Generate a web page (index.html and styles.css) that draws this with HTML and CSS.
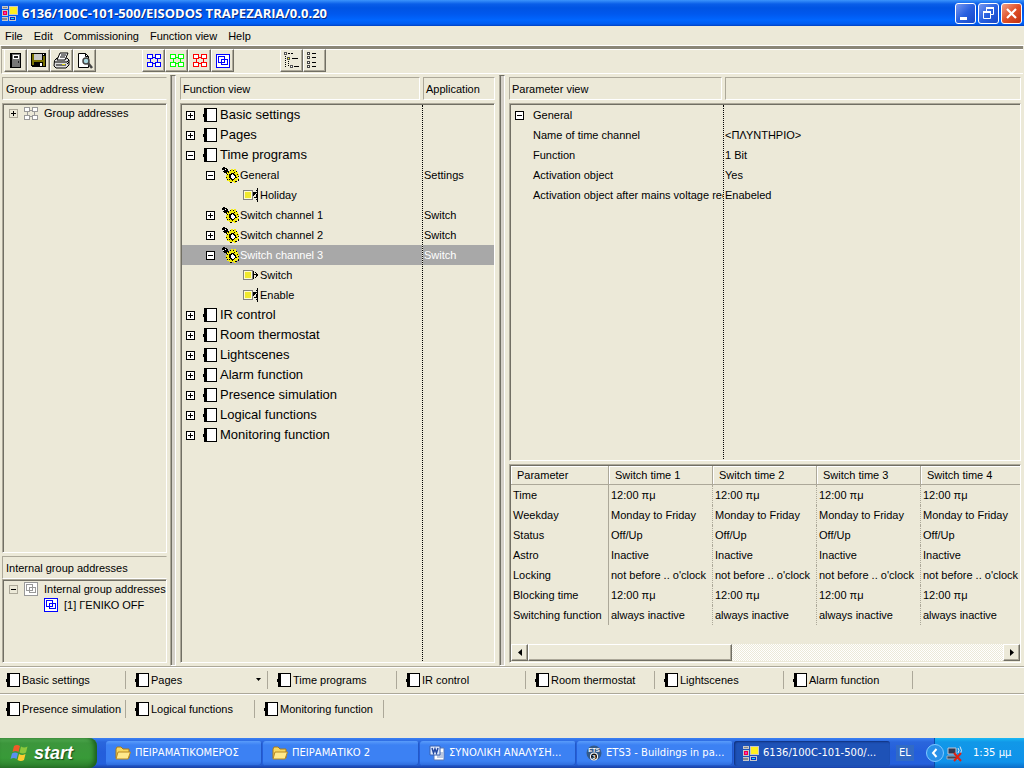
FILE: index.html
```html
<!DOCTYPE html>
<html lang="en">
<head>
<meta charset="utf-8">
<title>6136/100C-101-500/EISODOS TRAPEZARIA/0.0.20</title>
<link rel="stylesheet" href="styles.css">
</head>
<body>
<svg class="defs" aria-hidden="true">
  <symbol id="book" viewBox="0 0 14 14"><path d="M1 0h13v14H1zM0 6h1v3H0z" fill="#000"/><path d="M4 1h9v12H4z" fill="#fff"/></symbol>
  <symbol id="gears" viewBox="0 0 17 16">
    <path d="M1 0h2v1h2v1h1v2h2v2H7v1H4V6H2V5H1V3H0V1h1z" fill="#000"/><path d="M3 2h1v1H3zM1 3h1v1H1z" fill="#fff"/>
    <path d="M8 3h1V2h2v1h1V2h2v2h1v1h1v2h1v2h-1v2h1v2h-2v1h-1v2h-2v-1h-2v1H8v-1H7v-1H5v-2H4V8h1V5h2V4h1z" fill="#f4ec10"/>
    <path d="M8 3h1v1H8zM11 3h1v1h-1zM14 4h1v1h-1zM6 5h1v1H6zM5 7h1v1H5zM4 10h1v1H4zM15 7h1v1h-1zM16 9h1v1h-1zM14 10h1v1h-1zM5 12h1v1H5zM7 12h1v1H7zM8 15h2v1H8zM10 13h1v1h-1zM13 14h2v1h-2zM16 12h1v2h-1zM12 5h1v1h-1zM7 7h1v1H7zM9 6h1v1H9z" fill="#000"/>
    <path d="M9 6h3v1h1v1h1v3h-1v1h-1v1H9v-1H8v-1H7V8h1V7h1z" fill="#000"/><path d="M10 7h1v1h1v1h1v2h-1v1h-2v-1H9V8h1z" fill="#fff"/>
  </symbol>
  <symbol id="obj" viewBox="0 0 10 10"><path d="M0 0h10v10H0z" fill="#808080"/><path d="M1 1h8v8H1z" fill="#fffbd0"/><path d="M2 2h6v6H2z" fill="#f0e830"/></symbol>
  <symbol id="out" viewBox="0 0 15 12"><use href="#obj" y="1" width="10" height="10"/><path d="M10 2h1v8h-1zM11 5h4v1h-4zM12 3h1v1h1v1h1v2h-1v1h-1v1h-1V8h1V4h-1z" fill="#000"/></symbol>
  <symbol id="in" viewBox="0 0 15 14"><use href="#obj" y="2" width="10" height="10"/><path d="M14 0h1v14h-1zM10 4h4v1h-1v1h-1v1h-1v1h-1zM11 9h3v1h-3zM13 2h1v1h-1zM13 11h1v1h-1zM13 6h1v3h-1z" fill="#000"/></symbol>
  <symbol id="group" viewBox="0 0 14 13"><path d="M0 0h6v5H0zM8 0h6v5H8zM0 8h6v5H0zM8 8h6v5H8zM6 3h2v1H6zM6 9h2v1H6zM3 5h1v3H3zM10 5h1v3h-1z" fill="currentColor"/><path d="M1 1h4v3H1zM9 1h4v3H9zM1 9h4v3H1zM9 9h4v3H9z" fill="#fff"/></symbol>
  <symbol id="inner" viewBox="0 0 14 14"><path d="M0 0h14v14H0z" fill="currentColor"/><path d="M1 1h12v12H1z" fill="#fff"/><path d="M2 2h7v1H2zM2 3h1v6H2zM8 3h1v6H8zM2 8h6v1H2zM5 5h7v1H5zM5 6h1v5H5zM11 6h1v5h-1zM5 10h6v1H5z" fill="currentColor"/></symbol>
  <symbol id="app" viewBox="0 0 16 15"><path d="M0 0h6v3H0zM0 4h6v6H0zM7 0h9v9H7zM0 11h6v4H0zM7 10h7v5H7z" fill="#c8c8c8"/><path d="M1 1h4v1H1zM0 12h5v2H0z" fill="#888"/><path d="M1 5h4v4H1z" fill="#f00040"/><path d="M8 1h7v7H8z" fill="#ffef20"/><path d="M8 11h5v3H8z" fill="#1030c8"/><path d="M9 12h3v1H9z" fill="#18e8f0"/><path d="M2 6h2v2H2z" fill="#f030c0"/></symbol>
  <symbol id="folder" viewBox="0 0 16 14"><path d="M1 3l1-2h4l2 2h6v9H1z" fill="#f8d860" stroke="#a87818"/><path d="M3 6h12.500L13 13H1z" fill="#ffe98c" stroke="#b88820"/></symbol>
</svg>

<header class="titlebar">
  <svg class="app-icon" shape-rendering="crispEdges"><use href="#app"/></svg>
  <h1>6136/100C-101-500/EISODOS TRAPEZARIA/0.0.20</h1>
  <div class="window-buttons">
    <button aria-label="Minimize"><svg width="19" height="19"><path d="M4 13h7v3H4z" fill="#fff"/></svg></button>
    <button aria-label="Restore"><svg width="19" height="19"><path d="M7.500 7V4.500h7v6H12M4.500 8.500h7v6h-7z" fill="none" stroke="#fff"/><path d="M4 7h8v2H4zM7 3h8v2H7z" fill="#fff"/></svg></button>
    <button class="close" aria-label="Close"><svg width="19" height="19"><path d="M5 5l9 9M14 5l-9 9" stroke="#fff" stroke-width="2.200"/></svg></button>
  </div>
</header>

<nav class="menu"><button>File</button><button>Edit</button><button>Commissioning</button><button>Function view</button><button>Help</button></nav>

<div class="toolbar" role="toolbar">
  <div class="tools">
    <button aria-label="Close device"><svg width="19" height="19" shape-rendering="crispEdges"><path d="M4 2h11v15H4z" fill="#000"/><path d="M6 3h8v13H6z" fill="#777"/><path d="M7 4h6v4H7z" fill="#fff"/><path d="M8 5h4v2H8zM12 10h1v2h-1z" fill="#222"/></svg></button>
    <button aria-label="Save"><svg width="19" height="19" shape-rendering="crispEdges"><path d="M2 2h15v14H3v-1H2z" fill="#000"/><path d="M3 3h2v11H3zM14 5h2v10h-2zM5 9h9v2H5z" fill="#777000"/><path d="M5 3h8v6H5z" fill="#c8c8c8"/><path d="M14 3h1v1h-1zM11 12h2v3h-2z" fill="#fff"/></svg></button>
    <button aria-label="Print"><svg width="19" height="19"><path d="M2.500 9.500L5 7h10l2 2v5l-3 3H4l-2-2z" fill="#ddd" stroke="#000"/><path d="M5 9l3-7h8l-3 7z" fill="#fff" stroke="#000"/><path d="M9 4h5M8 6h5M3 11h12M4 14h10M15 11l2-2M15 13l2-2" stroke="#000"/><path d="M10 13h3v1h-3z" fill="#e8e020"/></svg></button>
    <button aria-label="Print preview"><svg width="19" height="19"><path d="M3.500 2.500h7l3 3v11h-10z" fill="#fff" stroke="#000"/><path d="M10.500 2.500v3h3" fill="none" stroke="#000"/><circle cx="11" cy="10" r="3" fill="#a8d8e0" stroke="#444" stroke-width="1.500"/><path d="M13 12l4 5" stroke="#444" stroke-width="2.500"/></svg></button>
  </div>
  <div class="tools">
    <button class="blue" aria-label="Group addresses"><svg class="i-group"><use href="#group"/></svg></button>
    <button class="green" aria-label="Sending addresses"><svg class="i-group"><use href="#group"/></svg></button>
    <button class="red" aria-label="Unused addresses"><svg class="i-group"><use href="#group"/></svg></button>
    <button class="blue" aria-label="Internal addresses"><svg class="i-inner"><use href="#inner"/></svg></button>
  </div>
  <div class="tools">
    <button aria-label="Expand tree"><svg width="19" height="19" shape-rendering="crispEdges"><path d="M2 1h3v3H2zM5 6h3v3H5zM8 14h3v3H8z" fill="#555"/><path d="M3 2h1v1H3zM9 15h1v1H9z" fill="#fff"/><path d="M6 7h1v1H6z" fill="#ff0"/><path d="M6 2h2v1H6zM9 2h2v1H9zM10 7h6v1h-6zM12 15h5v1h-5zM3 5h1v1H3zM3 7h1v1H3zM3 9h1v1H3zM3 11h1v1H3zM3 13h1v1H3zM3 15h1v1H3zM6 10h1v1H6zM6 12h1v1H6zM6 14h1v1H6z" fill="#000"/></svg></button>
    <button aria-label="Collapse tree"><svg width="19" height="19" shape-rendering="crispEdges"><path d="M2 1h3v3H2zM2 5h3v3H2zM2 10h3v3H2zM2 14h3v3H2z" fill="#444"/><path d="M3 2h1v1H3zM3 6h1v1H3zM3 11h1v1H3zM3 15h1v1H3z" fill="#fff"/><path d="M7 2h4v1H7zM7 6h4v1H7zM7 11h4v1H7zM7 15h4v1H7z" fill="#000"/></svg></button>
  </div>
</div>

<main class="workspace">
  <section class="panel addresses">
    <h2 class="head open">Group address view</h2>
    <div class="list grow small-tree">
      <div class="row"><button class="toggle plus" aria-label="Expand"></button><svg class="i-group muted"><use href="#group"/></svg><span>Group addresses</span></div>
    </div>
    <h2 class="head open">Internal group addresses</h2>
    <div class="list internal small-tree">
      <div class="row"><button class="toggle" aria-label="Collapse"></button><svg class="i-inner muted"><use href="#inner"/></svg><span>Internal group addresses</span></div>
      <div class="row child"><svg class="i-inner blue"><use href="#inner"/></svg><span>[1] ΓΕΝΙΚΟ OFF</span></div>
    </div>
  </section>
  <div class="splitter"></div>
  <section class="panel functions">
    <div class="heads"><h2 class="head">Function view</h2><h2 class="head">Application</h2></div>
    <div class="list split grow">
      <div class="names">
        <div class="row top"><button class="toggle plus" aria-label="Expand"></button><svg class="i-book"><use href="#book"/></svg><span>Basic settings</span></div>
        <div class="row top"><button class="toggle plus" aria-label="Expand"></button><svg class="i-book"><use href="#book"/></svg><span>Pages</span></div>
        <div class="row top"><button class="toggle" aria-label="Collapse"></button><svg class="i-book"><use href="#book"/></svg><span>Time programs</span></div>
        <div class="row channel"><button class="toggle" aria-label="Collapse"></button><svg class="i-gears"><use href="#gears"/></svg><span>General</span></div>
        <div class="row object"><svg class="i-in"><use href="#in"/></svg><span>Holiday</span></div>
        <div class="row channel"><button class="toggle plus" aria-label="Expand"></button><svg class="i-gears"><use href="#gears"/></svg><span>Switch channel 1</span></div>
        <div class="row channel"><button class="toggle plus" aria-label="Expand"></button><svg class="i-gears"><use href="#gears"/></svg><span>Switch channel 2</span></div>
        <div class="row channel selected"><button class="toggle" aria-label="Collapse"></button><svg class="i-gears"><use href="#gears"/></svg><span>Switch channel 3</span></div>
        <div class="row object"><svg class="i-out"><use href="#out"/></svg><span>Switch</span></div>
        <div class="row object"><svg class="i-in"><use href="#in"/></svg><span>Enable</span></div>
        <div class="row top"><button class="toggle plus" aria-label="Expand"></button><svg class="i-book"><use href="#book"/></svg><span>IR control</span></div>
        <div class="row top"><button class="toggle plus" aria-label="Expand"></button><svg class="i-book"><use href="#book"/></svg><span>Room thermostat</span></div>
        <div class="row top"><button class="toggle plus" aria-label="Expand"></button><svg class="i-book"><use href="#book"/></svg><span>Lightscenes</span></div>
        <div class="row top"><button class="toggle plus" aria-label="Expand"></button><svg class="i-book"><use href="#book"/></svg><span>Alarm function</span></div>
        <div class="row top"><button class="toggle plus" aria-label="Expand"></button><svg class="i-book"><use href="#book"/></svg><span>Presence simulation</span></div>
        <div class="row top"><button class="toggle plus" aria-label="Expand"></button><svg class="i-book"><use href="#book"/></svg><span>Logical functions</span></div>
        <div class="row top"><button class="toggle plus" aria-label="Expand"></button><svg class="i-book"><use href="#book"/></svg><span>Monitoring function</span></div>
      </div>
      <div class="values">
        <div class="row"></div><div class="row"></div><div class="row"></div>
        <div class="row">Settings</div><div class="row"></div>
        <div class="row">Switch</div><div class="row">Switch</div><div class="row selected">Switch</div>
      </div>
    </div>
  </section>
  <div class="splitter"></div>
  <section class="panel parameters">
    <div class="heads"><h2 class="head">Parameter view</h2><div class="head"></div></div>
    <div class="list split grow">
      <div class="names">
        <div class="row"><button class="toggle" aria-label="Collapse"></button><span>General</span></div>
        <div class="row param">Name of time channel</div>
        <div class="row param">Function</div>
        <div class="row param">Activation object</div>
        <div class="row param">Activation object after mains voltage rec</div>
      </div>
      <div class="values">
        <div class="row"></div><div class="row">&lt;ΠΛΥΝΤΗΡΙΟ&gt;</div><div class="row">1 Bit</div><div class="row">Yes</div><div class="row">Enabeled</div>
      </div>
    </div>
    <div class="list times">
      <div class="table-view">
        <table>
          <thead><tr><th>Parameter</th><th>Switch time 1</th><th>Switch time 2</th><th>Switch time 3</th><th>Switch time 4</th></tr></thead>
          <tbody>
            <tr><td>Time</td><td>12:00 πμ</td><td>12:00 πμ</td><td>12:00 πμ</td><td>12:00 πμ</td></tr>
            <tr><td>Weekday</td><td>Monday to Friday</td><td>Monday to Friday</td><td>Monday to Friday</td><td>Monday to Friday</td></tr>
            <tr><td>Status</td><td>Off/Up</td><td>Off/Up</td><td>Off/Up</td><td>Off/Up</td></tr>
            <tr><td>Astro</td><td>Inactive</td><td>Inactive</td><td>Inactive</td><td>Inactive</td></tr>
            <tr><td>Locking</td><td>not before .. o'clock</td><td>not before .. o'clock</td><td>not before .. o'clock</td><td>not before .. o'clock</td></tr>
            <tr><td>Blocking time</td><td>12:00 πμ</td><td>12:00 πμ</td><td>12:00 πμ</td><td>12:00 πμ</td></tr>
            <tr><td>Switching function</td><td>always inactive</td><td>always inactive</td><td>always inactive</td><td>always inactive</td></tr>
          </tbody>
        </table>
      </div>
      <div class="scrollbar">
        <button aria-label="Scroll left"><svg width="4" height="7"><path d="M4 0v7L0 3.500z"/></svg></button>
        <div class="thumb"></div><div class="track"></div>
        <button aria-label="Scroll right"><svg width="4" height="7"><path d="M0 0v7l4-3.500z"/></svg></button>
      </div>
    </div>
  </section>
</main>

<div class="shortcuts">
  <button><svg class="i-book"><use href="#book"/></svg>Basic settings</button>
  <button class="drop"><svg class="i-book"><use href="#book"/></svg>Pages<svg class="arrow" width="5" height="3"><path d="M0 0h5L2.500 3z"/></svg></button>
  <button><svg class="i-book"><use href="#book"/></svg>Time programs</button>
  <button><svg class="i-book"><use href="#book"/></svg>IR control</button>
  <button><svg class="i-book"><use href="#book"/></svg>Room thermostat</button>
  <button><svg class="i-book"><use href="#book"/></svg>Lightscenes</button>
  <button><svg class="i-book"><use href="#book"/></svg>Alarm function</button>
</div>
<div class="shortcuts last">
  <button><svg class="i-book"><use href="#book"/></svg>Presence simulation</button>
  <button><svg class="i-book"><use href="#book"/></svg>Logical functions</button>
  <button><svg class="i-book"><use href="#book"/></svg>Monitoring function</button>
</div>

<footer class="taskbar">
  <button class="start"><svg width="20" height="18" viewBox="0 0 20 18"><path d="M4 2q3-2 6 0L8.500 8q-3-2-6 0z" fill="#f05a28"/><path d="M11 2.500q3 2 6.500 0L16 8.500q-3 2-6.500 0z" fill="#8cc83c"/><path d="M2 9.500q3-2 6 0L6.500 15q-3-2-6 0z" fill="#5a90f0"/><path d="M9 10q3 2 6.500 0L14 16q-3 2-6.500 0z" fill="#fccc30"/></svg>start</button>
  <div class="tasks">
    <button><svg class="i-task"><use href="#folder"/></svg><span>ΠΕΙΡΑΜΑΤΙΚΟΜΕΡΟΣ</span></button>
    <button><svg class="i-task"><use href="#folder"/></svg><span>ΠΕΙΡΑΜΑΤΙΚΟ 2</span></button>
    <button><svg class="i-task" viewBox="0 0 16 16"><path d="M6 3h9v12H5V9" fill="#fff" stroke="#5878b8"/><path d="M8 8h6M8 10h6M8 12h6" stroke="#7890c0"/><path d="M1 1h10v9H1z" fill="#dce8fc" stroke="#3860b0"/><path d="M3 3l1.500 5L6 4l1.500 4L9 3" fill="none" stroke="#2448a0" stroke-width="1.500"/></svg><span>ΣΥΝΟΛΙΚΗ ΑΝΑΛΥΣΗ...</span></button>
    <button><svg class="i-task" viewBox="0 0 16 16"><circle cx="8" cy="8" r="7.500" fill="#345a88"/><text x="8" y="7" class="ets">ETS</text><circle cx="8" cy="11.500" r="4" fill="#fff"/><circle cx="8" cy="11.500" r="3" fill="#111"/><text x="8" y="14" class="ets">3</text></svg><span>ETS3 - Buildings in pa...</span></button>
    <button class="active"><svg class="i-task" shape-rendering="crispEdges"><use href="#app"/></svg><span>6136/100C-101-500/...</span></button>
  </div>
  <button class="lang">EL</button>
  <div class="tray">
    <button class="chevron" aria-label="Show hidden icons"><svg width="18" height="18"><circle cx="9" cy="9" r="8.500" fill="#2890e8" stroke="#80c8ff"/><path d="M10.500 5L7 9l3.500 4" fill="none" stroke="#fff" stroke-width="2"/></svg></button>
    <svg width="18" height="17" viewBox="0 0 18 17"><path d="M2 3h8v6H2z" fill="#303850" stroke="#c0c8d8"/><path d="M1 11h11v3H1z" fill="#404858" stroke="#a0a8b8"/><path d="M12 3q2 2 0 5M14 1.500q3 4 0 8" fill="none" stroke="#d8e8f8"/><path d="M8 8l7 8M15 8l-7 8" stroke="#e02010" stroke-width="2"/></svg>
    <time>1:35 μμ</time>
  </div>
</footer>
</body>
</html>
```
FILE: styles.css
```css
* { box-sizing: border-box; }
body {
  margin: 0;
  min-height: 100vh;
  display: flex;
  flex-direction: column;
  background: #ece9d8;
  color: #000;
  font: 11px/20px "Liberation Sans", Arial, sans-serif;
}
button { margin: 0; padding: 0; border: 0; background: none; color: inherit; font: inherit; }
h1, h2 { margin: 0; font: inherit; }
svg { display: block; flex: none; }
.defs { position: absolute; width: 0; height: 0; }
.i-book { width: 14px; height: 14px; }
.i-gears { width: 17px; height: 16px; }
.i-in { width: 15px; height: 14px; }
.i-out { width: 15px; height: 12px; }
.i-group { width: 14px; height: 13px; }
.i-inner { width: 14px; height: 14px; }
.i-task { width: 16px; height: 16px; }
.i-book, .i-gears, .i-in, .i-out, .i-group, .i-inner { shape-rendering: crispEdges; }
.blue { color: #0000ff; }
.green { color: #00ff00; }
.red { color: #ff0000; }
.muted { color: #999; }

.titlebar {
  height: 26px;
  display: flex;
  align-items: center;
  padding: 0 2px;
  background: linear-gradient(#3c94fc 0, #0a5ee8 4px, #0054e3 8px, #0058ee 14px, #0066ff 20px, #005cf0 24px, #0040c0 26px);
  color: #fff;
}
.app-icon { width: 16px; height: 15px; }
h1 { flex: 1; padding-left: 4px; font: bold 13px/24px "Open Sans", sans-serif; text-shadow: 1px 1px #0a2a80; white-space: nowrap; }
.window-buttons { display: flex; gap: 2px; }
.window-buttons button {
  width: 21px;
  height: 21px;
  border: 1px solid #fff;
  border-radius: 3px;
  background: linear-gradient(135deg, #7898f0, #2860e0 50%, #1848c8);
}
.window-buttons .close { background: linear-gradient(135deg, #f0a088, #e05028 50%, #c03010); }

.menu { height: 20px; display: flex; gap: 11px; padding-left: 5px; border-bottom: 1px solid #fff; line-height: 18px; }

.toolbar {
  height: 28px;
  display: flex;
  gap: 46px;
  margin: 0 1px;
  padding: 0 0 0 2px;
  border-top: 3px solid #8a8678;
  border-left: 1px solid #aca899;
  border-bottom: 1px solid #fff;
  box-shadow: inset 0 1px #fff;
}
.tools { display: flex; }
.tools button {
  width: 23px;
  height: 23px;
  display: grid;
  place-items: center;
  border: 1px solid;
  border-color: #fff #716f64 #716f64 #fff;
  box-shadow: inset -1px -1px #aca899;
}

.workspace { flex: 1; display: grid; grid-template-columns: 164px 6px 315px 6px minmax(0, 1fr); column-gap: 4px; padding: 3px 3px 0 2px; min-height: 592px; }
.panel { display: flex; flex-direction: column; min-width: 0; padding-bottom: 3px; }
.splitter { margin-top: -2px; border: 1px solid; border-color: #716f64 #fff #fff #aca899; background: #d4d0c8; box-shadow: inset 1px 0 #716f64; }
.head { height: 23px; padding-left: 2px; margin-bottom: 3px; border: 1px solid; border-color: #aca899 #fff #fff #aca899; line-height: 22px; white-space: nowrap; }
.head.open { border-right-color: transparent; }
.addresses { margin-right: -1px; }
.addresses .head { padding-left: 3px; }
.addresses .list + .head { margin-bottom: 0; }
.heads { display: grid; column-gap: 3px; }
.list { border: 1px solid; border-color: #aca899 #fff #fff #aca899; box-shadow: inset 1px 1px #716f64; padding: 1px 0 1px 1px; overflow: hidden; }
.grow { flex: 1; }
.addresses .grow { margin-bottom: 3px; }
.internal { height: 84px; }
.row { height: 20px; display: flex; align-items: center; white-space: nowrap; }
.toggle { position: relative; flex: none; width: 9px; height: 9px; border: 1px solid #000; background: #fff; }
.toggle::before { content: ""; position: absolute; left: 1px; top: 3px; width: 5px; height: 1px; background: #000; }
.plus::after { content: ""; position: absolute; left: 3px; top: 1px; width: 1px; height: 5px; background: #000; }
.small-tree .row { height: 16px; padding-left: 5px; gap: 6px; }
.small-tree .toggle { border-color: #aca899; background: #ece9d8; }
.small-tree .child { padding-left: 40px; gap: 6px; }

.functions .heads { grid-template-columns: 240px 1fr; }
.split { display: flex; }
.names { min-width: 0; overflow: hidden; }
.functions .names { width: 240px; flex: none; }
.values { flex: 1; border-left: 1px dotted #000; }
.values .row { padding-left: 1px; }
.names .row { padding-left: 4px; }
.names .top { gap: 8px; font-size: 13px; }
.names .top span { margin-left: -5px; }
.names .channel { padding-left: 24px; gap: 7px; }
.names .channel span { margin-left: -6px; }
.names .object { padding-left: 61px; gap: 2px; }
.names .selected, .values .selected { background: #a8a8a8; color: #fff; }

.parameters .heads { grid-template-columns: 213px 1fr; }
.parameters .names { width: 212px; flex: none; }
.parameters .names .row { gap: 9px; }
.parameters .names .param { padding-left: 22px; }

.times { height: 199px; margin-top: 3px; display: flex; flex-direction: column; }
.table-view { flex: 1; overflow: hidden; }
table { width: 513px; min-width: 100%; table-layout: fixed; border-collapse: separate; border-spacing: 0; }
th, td { height: 20px; padding: 0 0 0 2px; text-align: left; font-weight: normal; white-space: nowrap; line-height: 18px; border-right: 1px dotted #aca899; }
th { width: 104px; height: 19px; padding-left: 6px; border-right: 1px solid #aca899; border-bottom: 1px solid #aca899; box-shadow: inset 1px 1px #fff; }
th:first-child { width: 98px; }
td:first-child { border-right-style: solid; }
td:last-child { border-right: 0; }
.scrollbar { height: 17px; display: flex; }
.scrollbar button, .thumb { border: 1px solid; border-color: #fff #716f64 #716f64 #fff; box-shadow: inset -1px -1px #aca899; }
.scrollbar button { width: 17px; display: grid; place-items: center; }
.thumb { width: 40%; }
.track { flex: 1; background: repeating-conic-gradient(#fff 0 25%, #ece9d8 0 50%) 0 0 / 2px 2px; }

.shortcuts { height: 27px; display: flex; align-items: center; padding: 0 0 1px 6px; border-top: 1px solid #aca899; box-shadow: inset 0 1px #fff; }
.shortcuts button { width: 120px; height: 18px; display: flex; align-items: center; gap: 2px; margin-right: 9px; border-right: 1px solid #aca899; white-space: nowrap; }
.shortcuts .drop { width: 133px; }
.arrow { margin: 0 6px 0 auto; }
.shortcuts.last { height: 45px; align-items: flex-start; padding-top: 6px; }

.taskbar {
  height: 30px;
  display: flex;
  align-items: center;
  background: linear-gradient(#3a80f4 0, #2a66dc 4px, #245edb 14px, #2460dc 26px, #1941a5 30px);
  color: #fff;
  font-family: "DejaVu Sans", sans-serif;
}
.start {
  width: 97px;
  height: 30px;
  display: flex;
  align-items: center;
  gap: 4px;
  padding-left: 10px;
  border-radius: 0 8px 8px 0;
  background: linear-gradient(#5cb85c 0, #3c963c 5px, #389a38 20px, #2c7c2c 30px);
  box-shadow: inset -3px 0 4px #1c601c;
  font: italic bold 18px/26px "Liberation Sans", sans-serif;
  text-shadow: 1px 1px 1px #184818;
}
.tasks { flex: 1; display: flex; gap: 1px; margin: 0 6px 0 9px; min-width: 0; }
.tasks button {
  flex: 1 1 0;
  min-width: 0;
  height: 25px;
  display: flex;
  align-items: center;
  gap: 4px;
  padding-left: 9px;
  border-radius: 3px;
  background: linear-gradient(#5a9cfa, #3c81f3 4px, #3c81f3 20px, #2c68d8);
  box-shadow: inset -1px -1px #2258c8;
}
.tasks span { overflow: hidden; white-space: nowrap; font-size: 10px; }
.tasks .active { background: #1e52b7; box-shadow: inset 1px 1px 2px #10307c; }
.ets { fill: #fff; font: bold 6px/8px "Liberation Sans", sans-serif; text-anchor: middle; }
.lang { width: 18px; height: 16px; background: #316ac5; font-size: 10px; line-height: 16px; }
.tray {
  height: 30px;
  width: 90px;
  display: flex;
  align-items: center;
  gap: 2px;
  margin-left: 20px;
  background: linear-gradient(#18b8f4 0, #1198e8 4px, #0f92ea 24px, #0c6cc8 30px);
  border-left: 1px solid #0c4ca8;
}
.chevron { margin-left: -9px; }
.tray time { margin-left: 7px; font-size: 10px; white-space: nowrap; }
```
